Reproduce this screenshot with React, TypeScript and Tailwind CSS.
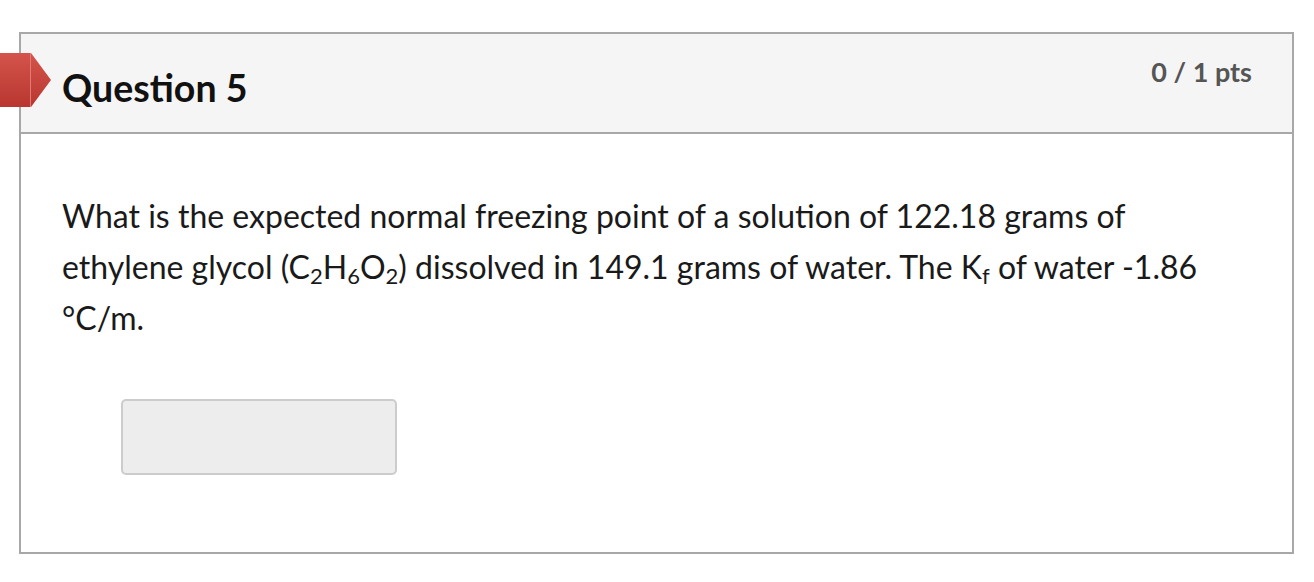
export default function App() {
  const sub = "text-[22px] align-[-5px] leading-none";
  return (
    <div className="w-[1314px] h-[582px] bg-white pt-[32px] pl-[19px]" style={{ fontFamily: "Lato, 'Open Sans', sans-serif" }}>
      <div className="w-[1275px] h-[522px] border-2 border-[#a8a8a8] flex flex-col">
        <div className="relative h-[100px] bg-[#f5f5f5] border-b-2 border-[#a8a8a8] flex justify-between">
          <div className="absolute left-[-21px] top-[19px] flex">
            <div className="w-[31px] h-[54px] bg-gradient-to-b from-[#d4544c] to-[#b8362f] border-r border-[#e07a72]" />
            <svg width="20" height="54" viewBox="0 0 20 54" className="block">
              <defs>
                <linearGradient id="fg" x1="0" y1="0" x2="0" y2="1">
                  <stop offset="0" stopColor="#d4544c" />
                  <stop offset="1" stopColor="#b8362f" />
                </linearGradient>
              </defs>
              <polygon points="0,0 20,27 0,54" fill="url(#fg)" />
            </svg>
          </div>
          <h2 className="pl-[41px] pt-[35px] text-[37.5px] font-bold text-[#111] leading-none">Question 5</h2>
          <div className="pr-[40px] pt-[24px] text-[27px] font-bold text-[#555] leading-none">0 / 1 pts</div>
        </div>
        <div className="pl-[41px] pt-[56px] flex flex-col gap-[56px]">
          <p className="w-[1150px] text-[32px] leading-[51px] text-[#1a1a1a]">
            What is the expected normal freezing point of a solution of 122.18 grams of ethylene glycol (C<span className={sub}>2</span>H<span className={sub}>6</span>O<span className={sub}>2</span>) dissolved in 149.1 grams of water. The K<span className={sub}>f</span> of water -1.86 °C/m.
          </p>
          <div className="ml-[59px] w-[276px] h-[76px] bg-[#ededed] border-2 border-[#cccccc] rounded-[5px]" />
        </div>
      </div>
    </div>
  );
}
